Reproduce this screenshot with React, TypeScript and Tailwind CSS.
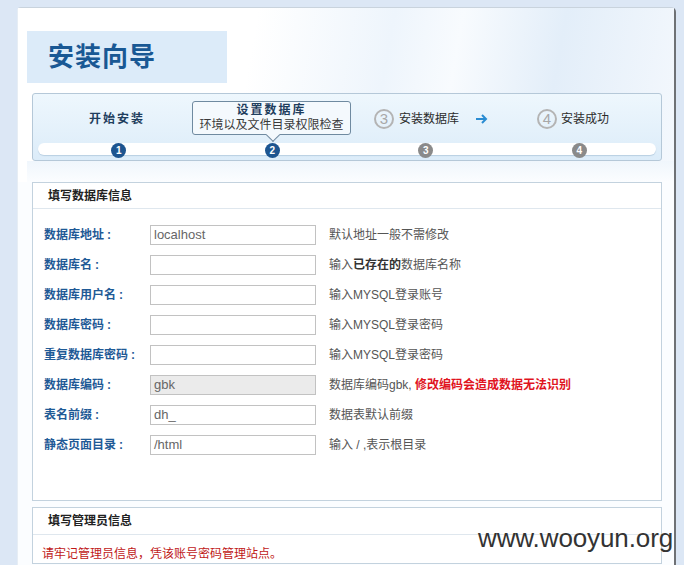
import React from "react";

const font = { fontFamily: '"Liberation Sans", "Noto Sans CJK SC", sans-serif' };

const rows = [
  { label: "数据库地址", value: "localhost", hint: <>默认地址一般不需修改</> },
  { label: "数据库名", value: "", hint: <>输入<b className="text-[#333]">已存在的</b>数据库名称</> },
  { label: "数据库用户名", value: "", hint: <>输入MYSQL登录账号</> },
  { label: "数据库密码", value: "", hint: <>输入MYSQL登录密码</> },
  { label: "重复数据库密码", value: "", hint: <>输入MYSQL登录密码</> },
  {
    label: "数据库编码",
    value: "gbk",
    disabled: true,
    hint: (
      <>
        数据库编码gbk, <b className="text-[#e0141e]">修改编码会造成数据无法识别</b>
      </>
    ),
  },
  { label: "表名前缀", value: "dh_", hint: <>数据表默认前缀</> },
  { label: "静态页面目录", value: "/html", hint: <>输入 / ,表示根目录</> },
];

function Dot({ n, on }: { n: number; on: boolean }) {
  return (
    <span
      className={
        "flex h-[15px] w-[15px] items-center justify-center rounded-full text-[10px] font-bold leading-none text-white " +
        (on ? "bg-[#1d5590]" : "bg-[#8a8a8a]")
      }
    >
      {n}
    </span>
  );
}

function Ring({ n }: { n: number }) {
  return (
    <span className="flex h-[20px] w-[20px] items-center justify-center rounded-full border-2 border-[#b4b4b4] text-[15px] leading-none text-[#a8a8a8]">
      {n}
    </span>
  );
}

export default function App() {
  return (
    <div className="relative h-[565px] w-[684px] overflow-hidden bg-[#dce7f5] pt-[7px] pl-[17px]" style={font}>
      <div className="h-[600px] w-[659px] rounded-tl-[4px] rounded-tr-[5px] border-t border-l border-r-2 border-t-[#c9d3dd] border-l-[#e6edf4] border-r-[#6e7175] bg-[#fbfdff]">
        {/* header */}
        <div className="bg-[linear-gradient(100deg,#ffffff_0%,#ffffff_35%,#eef5fc_55%,#f8fbfe_65%,#e3eef9_80%,#f4f8fd_100%)] pt-[23px] pl-[9px]">
          <div className="flex h-[52px] w-[200px] items-center bg-[#dcebf9] pl-[21px]">
            <h1 className="text-[26px] font-bold tracking-[1px] text-[#195894]">安装向导</h1>
          </div>
          {/* steps */}
          <div className="mt-[10px] ml-[5px] h-[68px] w-[630px] rounded-[3px] border border-[#b5c8d8] bg-[linear-gradient(#eef7fd,#dcecf9)]">
            <div className="grid h-[43px] w-[621px] grid-cols-4 items-center pl-[9px]">
              <div className="flex justify-center pt-[6px] pr-[3px] text-[12px] font-bold tracking-[2px] text-[#1f3e5e]">开始安装</div>
              <div className="flex justify-center pt-[4px]">
                <div className="relative flex h-[34px] w-[159px] shrink-0 flex-col items-center justify-center rounded-[3px] border border-[#6f8aa0] bg-[#f4f9fd] leading-[15px]">
                  <span className="text-[12px] font-bold tracking-[2px] text-[#1f3e5e]">设置数据库</span>
                  <span className="text-[12px] text-[#3a3a3a]">环境以及文件目录权限检查</span>
                  <span className="absolute -bottom-[6px] left-[75px] h-[10px] w-[10px] rotate-45 border-r border-b border-[#6f8aa0] bg-[#f4f9fd]" />
                </div>
              </div>
              <div className="flex items-center justify-center gap-[5px] pt-[6px] pl-[14px] text-[12px] text-[#2b2b2b]">
                <Ring n={3} />
                <span>安装数据库</span>
                <svg width="14" height="12" viewBox="0 0 14 12" className="ml-[11px]">
                  <path d="M1 6h10M7 2l4 4-4 4" fill="none" stroke="#2a8cd2" strokeWidth="2" />
                </svg>
              </div>
              <div className="flex items-center justify-center gap-[4px] pt-[6px] pr-[9px] text-[12px] text-[#2b2b2b]">
                <Ring n={4} />
                <span>安装成功</span>
              </div>
            </div>
            <div className="mx-[5px] mt-[6px] grid h-[12px] w-[618px] grid-cols-4 items-center rounded-full bg-white pl-[4px] shadow-[0_1px_1px_#b9cfe2]">
              <div className="flex justify-center"><Dot n={1} on /></div>
              <div className="flex justify-center"><Dot n={2} on /></div>
              <div className="flex justify-center"><Dot n={3} on={false} /></div>
              <div className="flex justify-center"><Dot n={4} on={false} /></div>
            </div>
          </div>
          <div className="h-[21px] bg-[linear-gradient(#f0f6fc,#fbfdff)]" />
        </div>

        {/* db section */}
        <div className="ml-[14px] w-[630px] border border-[#c3d2de] bg-white">
          <div className="flex h-[26px] items-center border-b border-[#dfe7ee] pl-[15px] text-[12px] font-bold text-[#222]">填写数据库信息</div>
          <div className="pt-[11px] pb-[40px] pl-[11px]">
            {rows.map((r, i) => (
              <div key={i} className="flex h-[30px] items-center">
                <span className="w-[106px] text-[12px] font-bold text-[#1f5a96]">
                  {r.label}
                  <span className="ml-[3px]">:</span>
                </span>
                <div
                  className={
                    "flex h-[20px] w-[166px] items-center border border-[#c2c2c2] pl-[3px] text-[13px] text-[#666] " +
                    (r.disabled ? "bg-[#ebebeb]" : "bg-white")
                  }
                >
                  {r.value}
                </div>
                <span className="ml-[13px] text-[12px] text-[#555]">{r.hint}</span>
              </div>
            ))}
          </div>
        </div>

        {/* admin section */}
        <div className="mt-[6px] ml-[14px] w-[630px] border border-[#c3d2de] bg-white">
          <div className="flex h-[27px] items-center border-b border-[#dfe7ee] pl-[15px] text-[12px] font-bold text-[#222]">填写管理员信息</div>
          <div className="pt-[10px] pl-[9px] text-[12px] text-[#c01818]">请牢记管理员信息，凭该账号密码管理站点。</div>
        </div>
      </div>

      <span className="absolute top-[519px] left-[478px] text-[26px] tracking-[-0.1px] text-[#333]" style={{ fontFamily: '"Liberation Sans", sans-serif' }}>
        www.wooyun.org
      </span>
    </div>
  );
}
